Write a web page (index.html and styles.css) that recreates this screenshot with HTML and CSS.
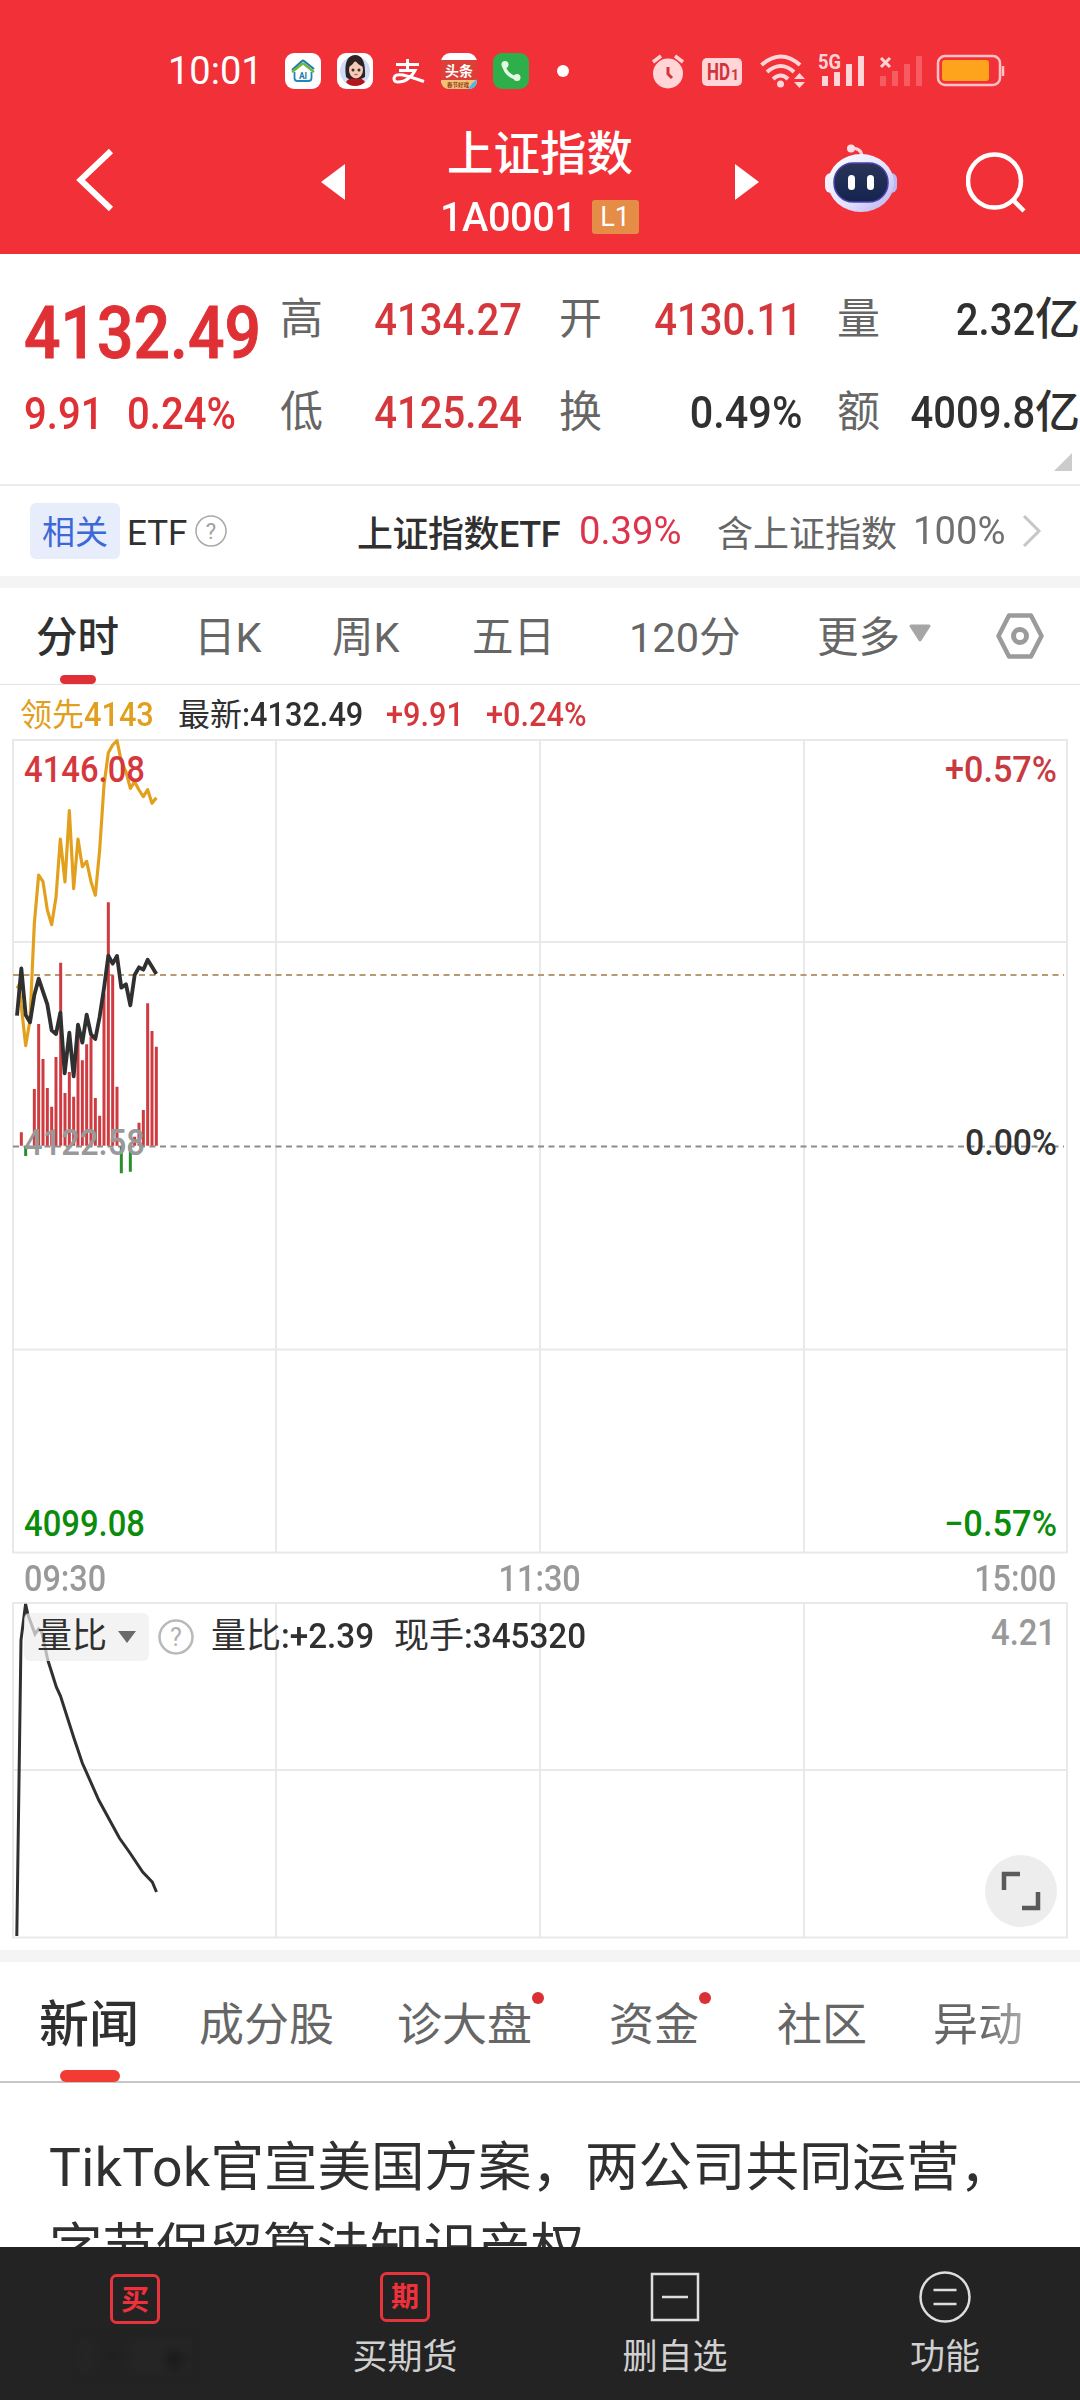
FILE: index.html
```html
<!DOCTYPE html>
<html lang="zh-CN">
<head>
    <meta charset="UTF-8">
    <meta name="viewport" content="width=device-width, initial-scale=1.0">
    <title>上证指数</title>
    <link rel="stylesheet" href="styles.css">
</head>
<body>
    <header class="header">
        <div class="status-bar">
            <span class="clock">10:01</span>
            <div class="notify-icons">
                <svg width="36" height="36" viewBox="0 0 36 36">
                    <rect width="36" height="36" rx="9" fill="#fff"/>
                    <path d="M7 17L17 8Q18 7 19 8L29 16" fill="none" stroke="#1878b4" stroke-width="2"/>
                    <path d="M7 19L17 11Q18 10 19 11L29 19" fill="none" stroke="#6fb83f" stroke-width="2.4"/>
                    <path d="M9.500 19V25Q9.500 28 12.500 28H23.500Q26.500 28 26.500 25V19" fill="none" stroke="#1f86b8" stroke-width="1.800"/>
                    <text x="18" y="25.500" font-size="8.500" font-weight="700" fill="#1878b4" text-anchor="middle">AI</text>
                </svg>
                <svg width="36" height="36" viewBox="0 0 36 36">
                    <rect width="36" height="36" rx="9" fill="#fff"/>
                    <circle cx="18" cy="18" r="15" fill="#cfdcf5"/>
                    <path d="M9 24Q6 3 18 2Q29 2 28 24L22 27H13Z" fill="#2d2322"/>
                    <ellipse cx="19" cy="17" rx="7" ry="8.500" fill="#f3cbb8"/>
                    <path d="M11 14Q17 12 18 6Q20 12 27 14Q25 5 18 4Q11 6 11 14" fill="#2d2322"/>
                    <circle cx="16" cy="17" r="1.500" fill="#332"/><circle cx="22" cy="17" r="1.500" fill="#332"/>
                    <path d="M17.500 21.500h3" stroke="#c9444b" stroke-width="1.200"/>
                    <path d="M9 29Q12 24 19 26Q25 24 28 29Q24 33 18 33Q12 33 9 29" fill="#b3151f"/>
                </svg>
                <svg width="36" height="36" viewBox="0 0 36 36" fill="none" stroke="#fff" stroke-width="3">
                    <path d="M7 11.500H30M18.500 6V17M10 17.500H26Q22 25 15 28Q5 31 5 25.500Q5.500 20.500 14 22Q24 24.500 35 28.500"/>
                </svg>
                <svg width="36" height="36" viewBox="0 0 36 36">
                    <rect width="36" height="36" rx="9" fill="#fff"/>
                    <rect y="7" width="36" height="21" fill="#dc3f38"/>
                    <path d="M0 27H36Q36 36 27 36H9Q0 36 0 27" fill="#f4c179"/>
                    <path d="M36 26Q36 36 27 36Q31 30 36 26" fill="#48b8e8"/>
                    <text x="18" y="23" font-size="14" font-weight="700" fill="#fff" text-anchor="middle">头条</text>
                    <text x="17" y="34" font-size="5.500" font-weight="700" fill="#8a3a1a" text-anchor="middle">春节好戏</text>
                </svg>
                <svg width="36" height="36" viewBox="0 0 36 36">
                    <rect width="36" height="36" rx="9" fill="#2fae4c"/>
                    <path d="M10.500 11Q12 22 24 25.500" fill="none" stroke="#e5f7e5" stroke-width="3.500"/>
                    <circle cx="12" cy="11.500" r="3.500" fill="#e5f7e5"/><circle cx="24" cy="24.500" r="3.500" fill="#e5f7e5"/>
                </svg>
                <svg width="36" height="36" viewBox="0 0 36 36"><circle cx="18" cy="18" r="6" fill="#fff"/></svg>
            </div>
            <div class="system-icons">
                <svg width="40" height="36" viewBox="0 0 40 36">
                    <circle cx="18" cy="20.500" r="15" fill="#ffd5d8"/>
                    <path d="M3 9L11 3M25 3L33 9" stroke="#ffd5d8" stroke-width="3.500"/>
                    <path d="M18 14V21L22 25" fill="none" stroke="#d8333c" stroke-width="3"/>
                </svg>
                <svg width="40" height="36" viewBox="0 0 40 36">
                    <rect y="5" width="40" height="28" rx="5" fill="#ffd5d8"/>
                    <text x="5" y="27" font-size="23" font-weight="700" fill="#d0343c" textLength="23" lengthAdjust="spacingAndGlyphs">HD</text>
                    <text x="29" y="27" font-size="14" font-weight="700" fill="#d0343c">1</text>
                </svg>
                <svg width="52" height="36" viewBox="0 0 52 36" fill="none" stroke="#ffd5d8" stroke-width="4">
                    <path d="M7.500 12Q27 -5 46 12M13 19Q27 7 40 19M19 26Q27 19 34 26"/>
                    <circle cx="26.500" cy="31" r="3.500" fill="#ffd5d8" stroke="none"/>
                    <path d="M40 26L45.500 20L51 26ZM40 29L45.500 35L51 29Z" fill="#ffd5d8" stroke="none"/>
                </svg>
                <svg width="48" height="36" viewBox="0 0 48 36">
                    <path d="M7 23V33M19 19V33M31 11V33M43 3V33" stroke="#ffd5d8" stroke-width="6"/>
                    <text x="0" y="16" font-size="20" font-weight="700" fill="#ffd5d8" textLength="23" lengthAdjust="spacingAndGlyphs">5G</text>
                </svg>
                <svg width="46" height="36" viewBox="0 0 46 36">
                    <path d="M5 23V33M17 18V33M29 11V33M41 3V33" stroke="#f75c62" stroke-width="6"/>
                    <path d="M3 5L12 14M12 5L3 14" stroke="#ffd5d8" stroke-width="3"/>
                </svg>
                <svg width="70" height="36" viewBox="0 0 70 36">
                    <rect x="2" y="3" width="62" height="29" rx="7" fill="none" stroke="#ffc3c6" stroke-width="2.500"/>
                    <rect x="6" y="7" width="47" height="21" rx="3" fill="#fda41c"/>
                    <path d="M67 13V23" stroke="#ffc3c6" stroke-width="2.500"/>
                </svg>
            </div>
        </div>
        <div class="nav-bar">
            <svg class="back" width="38" height="64" viewBox="0 0 38 64"><path d="M35 3L4.500 32L35 61" fill="none" stroke="#fff" stroke-width="6"/></svg>
            <svg width="24" height="36" viewBox="0 0 24 36"><path d="M24 0V36L0 18Z" fill="#fff"/></svg>
            <div class="title-box">
                <h1 class="title">上证指数</h1>
                <div class="code-line"><span class="code">1A0001</span><span class="level">L1</span></div>
            </div>
            <svg width="24" height="36" viewBox="0 0 24 36"><path d="M0 0V36L24 18Z" fill="#fff"/></svg>
            <svg class="robot" width="72" height="68" viewBox="0 0 72 68">
                <defs>
                    <linearGradient id="shell" x1="0" y1="0" x2="1" y2="1"><stop offset="0" stop-color="#fff"/><stop offset=".6" stop-color="#dfe0fb"/><stop offset="1" stop-color="#b6a9ee"/></linearGradient>
                    <linearGradient id="visor" x1="0" y1="0" x2="0" y2="1"><stop offset="0" stop-color="#293556"/><stop offset="1" stop-color="#142450"/></linearGradient>
                </defs>
                <path d="M26 4Q37 4 37 13" fill="none" stroke="#fbd5e0" stroke-width="3"/>
                <circle cx="26" cy="4.500" r="4" fill="#fbdde5"/>
                <rect x="0" y="29" width="12" height="20" rx="6" fill="#f2f0ff"/><rect x="60" y="29" width="12" height="20" rx="6" fill="#b9baf4"/>
                <ellipse cx="36" cy="39" rx="33" ry="29" fill="url(#shell)"/>
                <rect x="9" y="19" width="54" height="39" rx="19" fill="url(#visor)" stroke="#4d3fae" stroke-width="1.500"/>
                <rect x="23" y="31" width="7" height="15" rx="3.500" fill="#fff"/><rect x="42" y="31" width="7" height="15" rx="3.500" fill="#fff"/>
            </svg>
            <svg class="search" width="60" height="62" viewBox="0 0 60 62" fill="none" stroke="#fff" stroke-width="4.500"><circle cx="28.500" cy="30" r="26.500"/><path d="M47 49L58 60"/></svg>
        </div>
    </header>

    <section class="quote">
        <div class="price-box">
            <div class="price"><span class="num">4132.49</span></div>
            <div class="change"><span class="num">9.91</span><span class="num">0.24%</span></div>
        </div>
        <div class="stats">
            <span class="label">高</span><span class="value up"><span class="num">4134.27</span></span>
            <span class="label">开</span><span class="value up"><span class="num">4130.11</span></span>
            <span class="label">量</span><span class="value"><span class="num">2.32</span>亿</span>
            <span class="label">低</span><span class="value up"><span class="num">4125.24</span></span>
            <span class="label">换</span><span class="value"><span class="num wide">0.49%</span></span>
            <span class="label">额</span><span class="value"><span class="num">4009.8</span>亿</span>
        </div>
        <i class="corner"></i>
    </section>

    <section class="etf">
        <span class="tag">相关</span>
        <span class="etf-word">ETF</span>
        <svg width="32" height="34" viewBox="0 0 32 34"><circle cx="16" cy="17" r="15" fill="none" stroke="#a9a9a9" stroke-width="1.500"/><text x="16" y="25" font-size="22" fill="#a0a0a0" text-anchor="middle">?</text></svg>
        <span class="etf-name">上证指数ETF</span>
        <span class="etf-rate"><span class="num">0.39%</span></span>
        <span class="etf-hold">含上证指数</span>
        <span class="etf-full"><span class="num">100%</span></span>
        <svg width="20" height="34" viewBox="0 0 20 34"><path d="M2 2L17 17L2 32" fill="none" stroke="#c6c6c6" stroke-width="3"/></svg>
    </section>

    <nav class="periods">
        <span class="period active">分时</span>
        <span class="period">日K</span>
        <span class="period">周K</span>
        <span class="period">五日</span>
        <span class="period">120分</span>
        <span class="period">更多<svg width="24" height="20" viewBox="0 0 24 20"><path d="M3 2H21L12 16Z" fill="#a6a6a6" stroke="#a6a6a6" stroke-width="3" stroke-linejoin="round"/></svg></span>
        <svg width="52" height="50" viewBox="0 0 52 50" fill="none" stroke="#9b9b9b" stroke-linejoin="round"><path d="M15 4.500H37L47.500 25L37 45.500H15L4.500 25Z" stroke-width="4.500"/><circle cx="26" cy="25" r="6.500" stroke-width="5"/></svg>
    </nav>

    <section class="chart">
        <div class="legend">
            <span class="lead">领先<span class="num">4143</span></span>
            <span>最新<span class="num">:4132.49</span></span>
            <span class="up"><span class="num">+9.91</span></span>
            <span class="up"><span class="num">+0.24%</span></span>
        </div>
        <svg class="minute" width="1080" height="820" viewBox="0 0 1080 820">
            <path class="grid-line" d="M13 4H1067V816.500H13ZM276 4V816M540 4V816M804 4V816M13 206H1067M13 613.500H1067"/>
            <path d="M13 239H1064" stroke="#b89a72" stroke-width="2" stroke-dasharray="6 4.500"/>
            <path d="M13 410.500H1064" stroke="#8c8c8c" stroke-width="2" stroke-dasharray="6 4.500"/>
            <g transform="translate(0 -16) scale(.33333)" fill="none">
                <!-- volume bars, one per minute -->
                <path stroke="#ce3b40" stroke-width="9" d="M64 1277V1237M103 1277V1107M116 1277V912M129 1277V1017M142 1277V1104M155 1277V1160M168 1277V1011M182 1277V728M195 1277V1119M208 1277V1056M221 1277V1130M234 1277V940M247 1277V1021M260 1277V973M273 1277V950M286 1277V1134M299 1277V1187M312 1277V820M325 1277V547M338 1277V766M351 1277V1100M404 1277V1250M417 1277V1208M430 1277V1170M443 1277V850M456 1277V933M469 1277V980"/>
                <path stroke="#2b8e2b" stroke-width="9" d="M77 1280V1308M364 1280V1360M391 1280V1355"/>
                <path stroke="#e2a01d" stroke-width="9.500" stroke-linejoin="round" d="M51 805L57 795L77 977L90 900L103 610L116 465L129 485L142 570L155 614L168 532L181 357L195 486L208 272L221 506L234 357L247 440L260 424L273 485L286 526L299 390L312 195L325 98L338 75L351 62L364 125L378 155L391 205L404 185L417 210L430 230L443 209L456 250L469 233"/>
                <path stroke="#303030" stroke-width="11.500" stroke-linejoin="round" d="M51 887L64 745L77 885L90 907L103 825L116 776L129 815L142 853L155 931L168 942L181 878L194 1060L208 938L221 1069L234 914L247 968L260 884L273 943L286 957L299 890L312 805L325 707L338 731L351 708L364 803L378 793L391 856L404 765L417 742L430 749L443 719L456 740L469 762"/>
            </g>
            <g class="axis-text">
                <text x="24" y="46" fill="#d5383c" textLength="121" lengthAdjust="spacingAndGlyphs">4146.08</text>
                <text x="24" y="419" fill="#999" textLength="121" lengthAdjust="spacingAndGlyphs">4122.58</text>
                <text x="24" y="800" fill="#0c8c0c" textLength="121" lengthAdjust="spacingAndGlyphs">4099.08</text>
                <text x="945" y="46" fill="#c93a40" textLength="112" lengthAdjust="spacingAndGlyphs">+0.57%</text>
                <text x="965" y="419" fill="#333" textLength="92" lengthAdjust="spacingAndGlyphs">0.00%</text>
                <text x="944" y="800" fill="#0c8c0c" textLength="113" lengthAdjust="spacingAndGlyphs">−0.57%</text>
            </g>
        </svg>
        <div class="times">
            <span class="num">09:30</span><span class="num">11:30</span><span class="num">15:00</span>
        </div>
        <div class="sub-chart">
            <svg width="1080" height="340" viewBox="0 0 1080 340">
                <path class="grid-line" d="M13 3H1067V337.500H13ZM276 3V337M540 3V337M804 3V337M13 170H1067"/>
                <path d="M16.800 336L21 40L25.600 4L28 15L35 34L38.600 29L41.700 32L47.800 60L56.300 87L60.500 96L73.900 138L82.300 163L98.700 200L119.400 238L130 253L142.700 272L152.300 282L156.500 292" fill="none" stroke="#303030" stroke-width="3"/>
                <text class="axis-text" x="991" y="45" fill="#999" textLength="65" lengthAdjust="spacingAndGlyphs">4.21</text>
            </svg>
            <div class="sub-legend">
                <span class="picker">量比<svg width="20" height="14" viewBox="0 0 20 14"><path d="M1 1H19L10 13Z" fill="#6a6a6a"/></svg></span>
                <svg width="38" height="38" viewBox="0 0 38 38"><circle cx="19" cy="19" r="16.500" fill="none" stroke="#b9b9b9" stroke-width="2.500"/><text x="19" y="28" font-size="25" fill="#b0b0b0" text-anchor="middle">?</text></svg>
                <span class="ratio">量比<span class="num">:+2.39</span></span>
                <span>现手<span class="num">:345320</span></span>
            </div>
            <svg class="expand" width="72" height="72" viewBox="0 0 72 72"><circle cx="36" cy="36" r="36" fill="#ededed"/><path d="M19 35V19H35M53 37V53H37" fill="none" stroke="#5a5a5a" stroke-width="4.500"/></svg>
        </div>
    </section>

    <nav class="news-tabs">
        <span class="news-tab active">新闻</span>
        <span class="news-tab">成分股</span>
        <span class="news-tab"><span class="dot">诊大盘</span></span>
        <span class="news-tab"><span class="dot">资金</span></span>
        <span class="news-tab">社区</span>
        <span class="news-tab fade">异动</span>
    </nav>

    <article class="news"><span class="latin">TikTok</span>官宣美国方案，两公司共同运营，<br>字节保留算法知识产权</article>

    <footer class="toolbar">
        <div class="tool">
            <svg class="low" width="52" height="52" viewBox="0 0 52 52"><rect x="2.500" y="2.500" width="47" height="47" rx="5" fill="none" stroke="#e5343c" stroke-width="3"/><text x="26" y="36.500" font-size="28" font-weight="700" fill="#f0303a" text-anchor="middle">买</text></svg>
            <span class="smudge"></span>
        </div>
        <div class="tool">
            <svg width="52" height="52" viewBox="0 0 52 52"><rect x="2.500" y="2.500" width="47" height="47" rx="5" fill="none" stroke="#e5343c" stroke-width="3"/><text x="26" y="36" font-size="28" font-weight="700" fill="#f0303a" text-anchor="middle">期</text></svg>
            <span>买期货</span>
        </div>
        <div class="tool">
            <svg width="52" height="52" viewBox="0 0 52 52" fill="none" stroke="#ddd" stroke-width="2.500"><path d="M3 3H49V49H3ZM13 26H39"/></svg>
            <span>删自选</span>
        </div>
        <div class="tool">
            <svg width="52" height="52" viewBox="0 0 52 52" fill="none" stroke="#ddd" stroke-width="2.500"><circle cx="26" cy="26" r="24.500"/><path d="M14.500 19H37.500M14.500 33H37.500"/></svg>
            <span>功能</span>
        </div>
    </footer>
</body>
</html>
```
FILE: styles.css
```css
* {
    box-sizing: border-box;
}
body {
    width: 1080px;
    height: 2400px;
    margin: 0;
    overflow: hidden;
    display: flex;
    flex-direction: column;
    background: #fff;
    color: #303030;
    font-family: Roboto, "Noto Sans CJK SC", sans-serif;
}
svg {
    display: block;
    flex: none;
}
/* narrow digits */
.num {
    display: inline-block;
    transform: scaleX(.89);
    transform-origin: left center;
    font-weight: 500;
}
.num.wide {
    transform: scaleX(.92);
}
.up {
    color: #d5383c;
}

/* header */
.header {
    height: 254px;
    background: #f23037;
    color: #fff;
    flex: none;
}
.status-bar {
    height: 110px;
    padding: 32px 74px 0 168px;
    display: flex;
    align-items: center;
}
.clock {
    width: 117px;
    font-size: 38px;
}
.notify-icons {
    display: flex;
    gap: 16px;
}
.system-icons {
    display: flex;
    gap: 12px;
    margin-left: auto;
}
.nav-bar {
    height: 144px;
    padding-left: 76px;
    display: flex;
    align-items: center;
}
.back {
    margin: -5px 207px 0 0;
}
.title-box {
    width: 390px;
    text-align: center;
}
.title {
    margin: 0;
    font-size: 46.5px;
    line-height: 70px;
    font-weight: 500;
}
.code-line {
    display: flex;
    justify-content: center;
    align-items: center;
    height: 56px;
    padding-left: 3px;
}
.code {
    width: 136px;
    margin: 0 16px 0 -5px;
    font-size: 41px;
    font-weight: 500;
    letter-spacing: -.5px;
    text-align: left;
    white-space: nowrap;
    transform: scaleX(.97);
    transform-origin: left center;
}
.level {
    width: 47px;
    height: 34px;
    border-radius: 3px;
    background: #e58c46;
    font-size: 27px;
    line-height: 34px;
}
.robot {
    margin: -8px 0 0 66px;
}
.search {
    margin-left: 69px;
}

/* quote */
.quote {
    position: relative;
    height: 232px;
    flex: none;
    display: flex;
    border-bottom: 2px solid #ececec;
}
.price-box {
    width: 280px;
    padding: 33px 0 0 24px;
    color: #df3135;
}
.price {
    height: 91px;
    font-size: 73px;
    line-height: 92px;
}
.price .num {
    transform: scaleX(.88);
    -webkit-text-stroke: 1px #df3135;
}
.change {
    display: grid;
    grid-template-columns: 103px 140px;
    font-size: 45px;
    line-height: 72px;
}
.stats {
    display: grid;
    grid-template-columns: 43px 199px 37px 43px 200px 35px 43px 200px;
    grid-template-rows: 93px 93px;
    padding-top: 20px;
    width: 800px;
    align-items: center;
    font-size: 45px;
    line-height: 66px;
}
.stats .label {
    font-size: 43px;
    color: #666;
    padding-bottom: 4px;
}
.stats .label:nth-child(6n+3) {
    grid-column: 4;
}
.stats .label:nth-child(6n+5) {
    grid-column: 7;
}
.value {
    padding-bottom: 2px;
    text-align: right;
    white-space: nowrap;
    font-weight: 500;
}
.value .num {
    transform-origin: right center;
}
.corner {
    position: absolute;
    right: 8px;
    bottom: 13px;
    border-left: 18px solid transparent;
    border-bottom: 18px solid #ccc;
}

/* etf row */
.etf {
    height: 90px;
    flex: none;
    padding-left: 30px;
    display: flex;
    align-items: center;
    font-size: 36px;
}
.tag {
    width: 90px;
    height: 56px;
    border-radius: 6px;
    background: #e7edfa;
    color: #3c68d8;
    font-size: 33px;
    line-height: 59px;
    text-align: center;
}
.etf-word {
    width: 68px;
    margin-left: 7px;
    padding-top: 4px;
    font-size: 35px;
}
.etf-name {
    width: 222px;
    margin-left: 130px;
    font-size: 36px;
    letter-spacing: -.5px;
    font-weight: 500;
}
.etf-rate {
    width: 138px;
    font-size: 39px;
    color: #dd344c;
}
.etf-hold {
    width: 196px;
    color: #666;
}
.etf-full {
    width: 109px;
    font-size: 39px;
    color: #707070;
}
.etf-rate .num,
.etf-full .num {
    font-weight: 400;
    transform: scaleX(.98);
}

/* period tabs */
.periods {
    height: 109px;
    flex: none;
    padding-left: 36px;
    border-top: 12px solid #f4f4f4;
    border-bottom: 1px solid #e2e2e2;
    display: grid;
    grid-template-columns: 158px 138px 140px 157px 188px 177px 52px;
    align-items: center;
}
.period {
    display: flex;
    align-items: center;
    height: 96px;
    padding-bottom: 4px;
    font-size: 41.5px;
    color: #666;
}
.period svg {
    margin-left: 8px;
}
.active {
    position: relative;
    color: #303030;
    font-weight: 500;
}
.active::after {
    content: "";
    position: absolute;
    left: 24px;
    bottom: 0;
    width: 36px;
    height: 9px;
    border-radius: 5px;
    background: #df3135;
}

/* charts */
.chart {
    height: 1265px;
    flex: none;
}
.legend {
    height: 51px;
    padding: 9px 0 0 20px;
    display: grid;
    grid-template-columns: 158px 208px 100px 130px;
    font-size: 32px;
    line-height: 42px;
    white-space: nowrap;
}
.legend .num {
    font-size: 33px;
    transform: scaleX(.93);
}
.lead {
    color: #e0a01d;
}
.grid-line {
    fill: none;
    stroke: #e9e9e9;
    stroke-width: 2;
}
.axis-text {
    font-size: 36px;
    font-weight: 500;
}
.times {
    height: 44px;
    padding: 0 24px;
    display: flex;
    justify-content: space-between;
    font-size: 36px;
    line-height: 46px;
    color: #999;
}
.times .num {
    transform: scaleX(.9);
}
.times .num:nth-child(2) {
    transform-origin: center;
}
.times .num:nth-child(3) {
    transform-origin: right;
}
.sub-chart {
    position: relative;
    height: 350px;
}
.sub-legend {
    position: absolute;
    left: 24px;
    top: 13px;
    height: 48px;
    display: flex;
    align-items: center;
    font-size: 35px;
    line-height: 46px;
    white-space: nowrap;
}
.sub-legend .num {
    transform: scaleX(.95);
}
.picker {
    width: 125px;
    height: 48px;
    margin-right: 8px;
    padding-left: 13px;
    display: flex;
    align-items: center;
    gap: 10px;
    border-radius: 6px;
    background: rgba(238, 238, 238, .72);
}
.ratio {
    width: 183px;
    margin-left: 16px;
}
.expand {
    position: absolute;
    left: 985px;
    top: 255px;
}

/* news */
.news-tabs {
    height: 133px;
    flex: none;
    padding-left: 39px;
    border-top: 12px solid #f4f4f4;
    border-bottom: 2px solid #c6c6c6;
    display: grid;
    grid-template-columns: 160px 198px 212px 168px 156px 100px;
}
.news-tab {
    height: 120px;
    font-size: 45px;
    line-height: 127px;
    color: #666;
    white-space: nowrap;
}
.news-tab.active {
    font-size: 50px;
    color: #303030;
}
.news-tab.active::after {
    left: 21px;
    width: 60px;
    height: 12px;
    border-radius: 6px;
    background: #f23b33;
}
.dot {
    position: relative;
}
.dot::after {
    content: "";
    position: absolute;
    right: -12px;
    top: -7px;
    width: 12px;
    height: 12px;
    border-radius: 50%;
    background: #d93035;
}
.fade {
    width: 88px;
    background: linear-gradient(90deg, #666 55%, #aaa);
    -webkit-background-clip: text;
    background-clip: text;
    color: transparent;
}
.news {
    height: 164px;
    flex: none;
    overflow: hidden;
    padding: 44px 0 0 49px;
    font-size: 53.5px;
    line-height: 81px;
    white-space: nowrap;
}
.latin {
    letter-spacing: .4px;
}

/* bottom bar */
.toolbar {
    height: 153px;
    flex: none;
    display: grid;
    grid-template-columns: repeat(4, 1fr);
    background: #232323;
    color: #d0d0d0;
}
.tool {
    padding-top: 24px;
    display: flex;
    flex-direction: column;
    align-items: center;
    font-size: 35px;
    line-height: 44px;
}
.tool svg {
    margin-bottom: 13px;
}
.tool .low {
    margin-top: 2px;
}
.smudge {
    width: 112px;
    height: 36px;
    background: radial-gradient(circle at 85% 60%, #1b1b1b 0 4px, transparent 14px), radial-gradient(circle at 30% 50%, #1f1f1f, transparent 26px), #252525;
    filter: blur(3px);
}
```
